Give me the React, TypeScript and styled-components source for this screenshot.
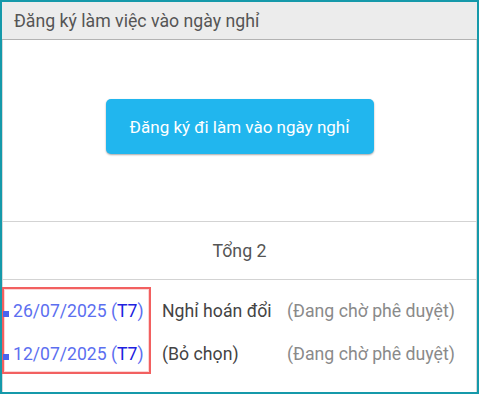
import React from "react";
import styled, { createGlobalStyle } from "styled-components";

const Global = createGlobalStyle`
  html, body { margin: 0; padding: 0; background: #ffffff; }
  body { font-family: Roboto, "Noto Sans", Arial, sans-serif; }
  * { box-sizing: border-box; }
`;

const Frame = styled.div`
  width: 479px;
  height: 394px;
  border: 2px solid #1599aa;
  background: #ffffff;
  display: flex;
  flex-direction: column;
  box-shadow: inset 1px 0 0 #d8d8d8, inset -1px 0 0 #d8d8d8;
  overflow: hidden;
`;

const Header = styled.div`
  height: 38px;
  flex: none;
  background: #ececec;
  border-bottom: 1px solid #b3b3b3;
  display: flex;
  align-items: center;
  padding-left: 12px;
  font-size: 17.7px;
  color: #555555;
`;

const ActionSection = styled.div`
  height: 182px;
  flex: none;
  display: flex;
  justify-content: center;
  align-items: flex-start;
  padding-top: 59px;
  border-bottom: 1px solid #d3d3d3;
`;

const PrimaryButton = styled.button`
  width: 268px;
  height: 55px;
  border: none;
  border-radius: 5px;
  background: #21b6ee;
  color: #ffffff;
  font-family: Roboto, Arial, sans-serif;
  font-size: 17px;
  box-shadow: 0 1px 2px rgba(0, 0, 0, 0.35);
  cursor: pointer;
`;

const TotalRow = styled.div`
  height: 58px;
  flex: none;
  display: flex;
  align-items: center;
  justify-content: center;
  border-bottom: 1px solid #d3d3d3;
  font-size: 17.8px;
  color: #555555;
`;

const List = styled.div`
  display: grid;
  grid-template-columns: 149px 125px auto;
  grid-template-rows: 43px 43px;
  padding-top: 8px;
  font-size: 17.7px;
`;

const Highlight = styled.div`
  grid-column: 1;
  grid-row: 1 / 3;
  border: 2px solid #f26060;
  box-shadow: inset 0 0 0 1px #fbd6d6;
  margin-top: -1px;
  pointer-events: none;
`;

const DateCell = styled.div<{ $row: number }>`
  grid-column: 1;
  grid-row: ${(p) => p.$row};
  display: flex;
  align-items: center;
  color: #5c6ff0;
  font-size: 17.6px;
  padding-left: 1px;
  padding-top: 2px;
`;

const Bullet = styled.span`
  width: 6px;
  height: 6px;
  background: #4b64ee;
  margin-right: 4px;
  margin-top: 7px;
  flex: none;
`;

const Day = styled.span`
  color: #2020e0;
`;

const TypeCell = styled.div<{ $row: number }>`
  grid-column: 2;
  grid-row: ${(p) => p.$row};
  display: flex;
  align-items: center;
  padding-left: 11px;
  padding-top: 2px;
  color: #444444;
  white-space: nowrap;
`;

const StatusCell = styled.div<{ $row: number }>`
  grid-column: 3;
  grid-row: ${(p) => p.$row};
  display: flex;
  align-items: center;
  padding-left: 11px;
  padding-top: 2px;
  color: #8a8a8a;
  white-space: nowrap;
`;

const items = [
  { date: "26/07/2025", day: "T7", type: "Nghỉ hoán đổi", status: "(Đang chờ phê duyệt)" },
  { date: "12/07/2025", day: "T7", type: "(Bỏ chọn)", status: "(Đang chờ phê duyệt)" },
];

export default function App() {
  return (
    <>
      <Global />
      <Frame>
        <Header>Đăng ký làm việc vào ngày nghỉ</Header>
        <ActionSection>
          <PrimaryButton>Đăng ký đi làm vào ngày nghỉ</PrimaryButton>
        </ActionSection>
        <TotalRow>Tổng 2</TotalRow>
        <List>
          <Highlight />
          {items.map((it, i) => (
            <React.Fragment key={i}>
              <DateCell $row={i + 1}>
                <Bullet />
                {it.date} (<Day>{it.day}</Day>)
              </DateCell>
              <TypeCell $row={i + 1}>{it.type}</TypeCell>
              <StatusCell $row={i + 1}>{it.status}</StatusCell>
            </React.Fragment>
          ))}
        </List>
      </Frame>
    </>
  );
}
